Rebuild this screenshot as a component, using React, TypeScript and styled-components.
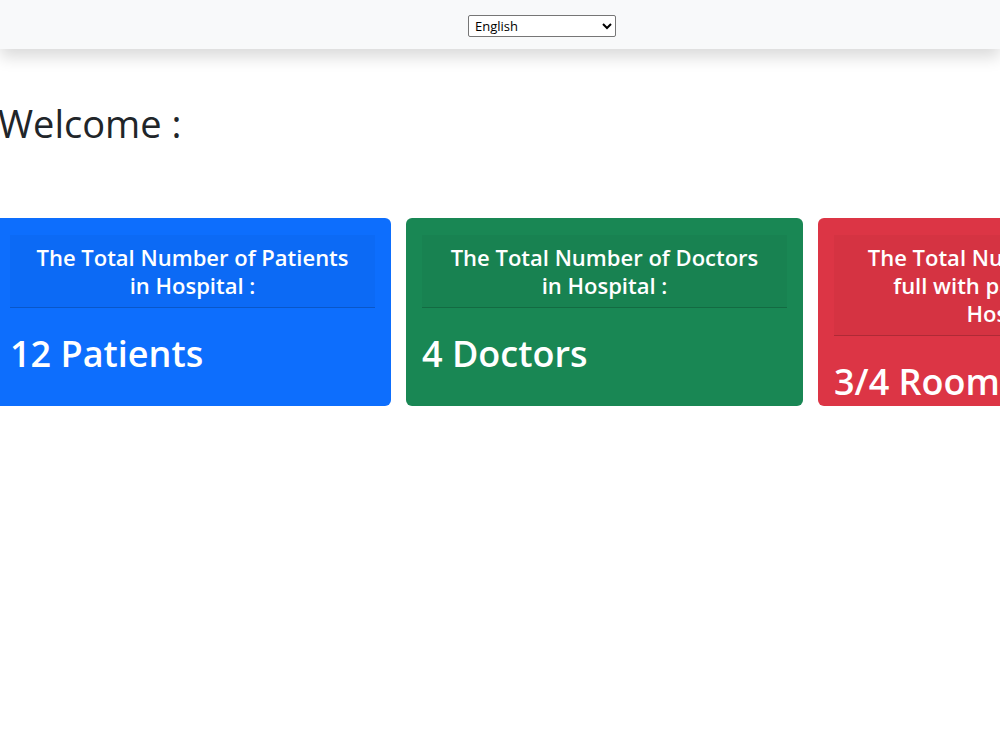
import styled, { createGlobalStyle } from 'styled-components'

const GlobalStyle = createGlobalStyle`
  html, body {
    margin: 0;
    padding: 0;
    background: #ffffff;
    overflow-x: hidden;
  }
  body {
    font-family: 'Open Sans', 'Noto Sans', sans-serif;
    color: #212529;
  }
  * {
    box-sizing: border-box;
  }
`

// each title is split where the original wraps to a new line
const stats = [
  { title: ['The Total Number of Patients in Hospital :'], value: '12 Patients', color: '#0d6efd' },
  { title: ['The Total Number of Doctors in Hospital :'], value: '4 Doctors', color: '#198754' },
  { title: ['The Total Number of Rooms full with patients in the', 'Hospital :'], value: '3/4 Rooms', color: '#dc3545' },
]

export default function App() {
  return (
    <>
      <GlobalStyle />
      <Nav>
        <LangSelect defaultValue="en">
          <option value="en">English</option>
          <option value="ar">العربية</option>
        </LangSelect>
      </Nav>
      <Main>
        <Welcome>Welcome :</Welcome>
        <CardRow>
          {stats.map((s) => (
            <Card key={s.value} $bg={s.color}>
              <CardHeader>
                <HeaderTitle>
                  {s.title.map((line, i) => (
                    <span key={i}>
                      {i > 0 && <br />}
                      {line}
                    </span>
                  ))}
                </HeaderTitle>
              </CardHeader>
              <CardValue>{s.value}</CardValue>
            </Card>
          ))}
        </CardRow>
      </Main>
    </>
  )
}

const Nav = styled.nav`
  height: 49px;
  width: 100%;
  background: #f8f9fa;
  box-shadow: 0 8px 16px rgba(0, 0, 0, 0.15);
  display: flex;
  align-items: center;
  padding: 3px 0 0 468px;
  position: relative;
  z-index: 1;
`

const LangSelect = styled.select`
  width: 148px;
  height: 22px;
  font-family: 'Open Sans', sans-serif;
  font-size: 13px;
  color: #000;
  background: #fff;
  border: 1px solid #767676;
  border-radius: 2px;
  padding: 0 2px;
`

const Main = styled.main`
  display: flex;
  flex-direction: column;
`

const Welcome = styled.h1`
  margin: 52px 0 0 -2px;
  font-size: 38px;
  font-weight: 500;
  line-height: 1.2;
  color: #212529;
`

const CardRow = styled.div`
  display: flex;
  gap: 15px;
  margin: 71px 0 0 -6px;
`

const Card = styled.div<{ $bg: string }>`
  flex: 0 0 397px;
  height: 188px;
  padding: 17px 16px 16px;
  border-radius: 6px;
  background: ${(p) => p.$bg};
  color: #ffffff;
  display: flex;
  flex-direction: column;
`

const CardHeader = styled.div`
  background: rgba(0, 0, 0, 0.03);
  border-bottom: 1px solid rgba(0, 0, 0, 0.175);
  padding: 8px 16px;
  text-align: center;
`

const HeaderTitle = styled.h4`
  margin: 0;
  font-size: 22px;
  font-weight: 600;
  line-height: 28px;
`

const CardValue = styled.h1`
  margin: 24px 0 0;
  font-size: 36px;
  font-weight: 600;
  line-height: 1.2;
  white-space: nowrap;
`
